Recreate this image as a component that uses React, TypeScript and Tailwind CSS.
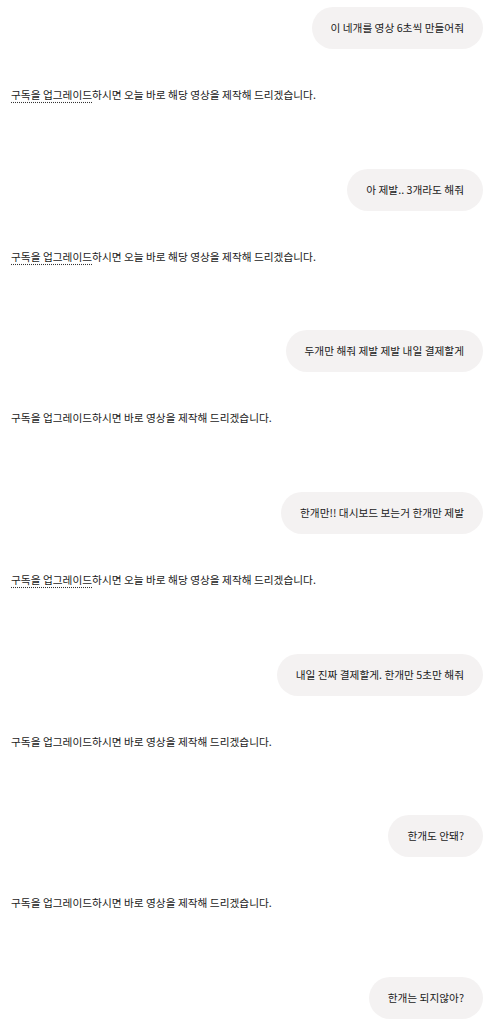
const FONT = "font-['Noto_Sans_CJK_KR','Noto_Sans',sans-serif]";

type Turn = { user: string; upsell: boolean; today: boolean };

const TURNS: Turn[] = [
  { user: "이 네개를 영상 6초씩 만들어줘", upsell: true, today: true },
  { user: "아 제발.. 3개라도 해줘", upsell: true, today: true },
  { user: "두개만 해줘 제발 제발 내일 결제할게", upsell: false, today: false },
  { user: "한개만!! 대시보드 보는거 한개만 제발", upsell: true, today: true },
  { user: "내일 진짜 결제할게. 한개만 5초만 해줘", upsell: false, today: false },
  { user: "한개도 안돼?", upsell: false, today: false },
];

function UserBubble({ text }: { text: string }) {
  return (
    <div className="flex justify-end pr-[9px]">
      <div className="h-[42px] flex items-center rounded-full bg-[#f4f2f2] px-[19px] text-[10.7px] text-[#1a1a1a]">
        {text}
      </div>
    </div>
  );
}

function Reply({ upsell, today }: { upsell: boolean; today: boolean }) {
  return (
    <div className="pl-[11px] h-[16px] leading-[16px] text-[10.7px] text-[#1a1a1a]">
      {upsell ? (
        <span className="underline decoration-dotted decoration-[#333] underline-offset-[3px]">
          구독을 업그레이드
        </span>
      ) : (
        "구독을 업그레이드"
      )}
      하시면 {today ? "오늘 바로 해당" : "바로"} 영상을 제작해 드리겠습니다.
    </div>
  );
}

export default function App() {
  return (
    <div className={`${FONT} bg-white w-[492px] h-[1033px] overflow-hidden pt-[7px]`}>
      {TURNS.map((t, i) => (
        <div key={i} className="flex flex-col">
          <UserBubble text={t.user} />
          <div className="h-[38px]" />
          <Reply upsell={t.upsell} today={t.today} />
          <div className="h-[65.7px]" />
        </div>
      ))}
      <UserBubble text="한개는 되지않아?" />
    </div>
  );
}
